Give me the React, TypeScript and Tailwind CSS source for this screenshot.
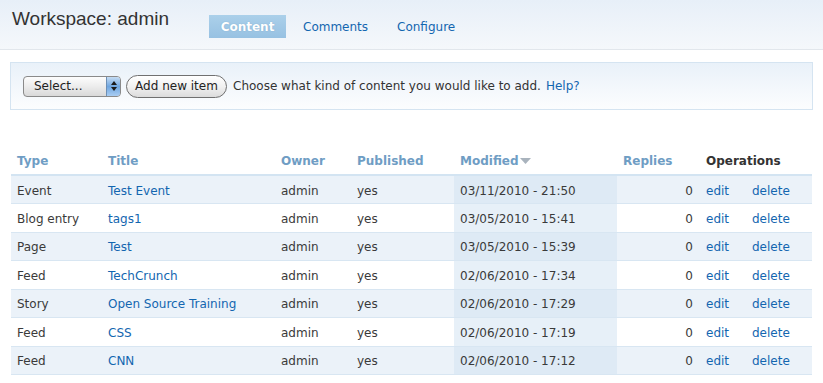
import React from "react";

const rows = [
  { type: "Event", title: "Test Event", date: "03/11/2010 - 21:50" },
  { type: "Blog entry", title: "tags1", date: "03/05/2010 - 15:41" },
  { type: "Page", title: "Test", date: "03/05/2010 - 15:39" },
  { type: "Feed", title: "TechCrunch", date: "02/06/2010 - 17:34" },
  { type: "Story", title: "Open Source Training", date: "02/06/2010 - 17:29" },
  { type: "Feed", title: "CSS", date: "02/06/2010 - 17:19" },
  { type: "Feed", title: "CNN", date: "02/06/2010 - 17:12" },
];

export default function App() {
  return (
    <div className="w-[823px] h-[383px] overflow-hidden bg-white font-['DejaVu_Sans',sans-serif] text-[12px] text-[#3a3a3a]">
      <div className="h-[50px] border-b border-[#e2e7ec] bg-gradient-to-b from-[#e7eff8] to-[#f5f8fb] flex items-start pl-[12px]">
        <div className="font-['Liberation_Sans',Arial,sans-serif] text-[19px] leading-[24px] text-[#333] pt-[7px]">
          Workspace: admin
        </div>
        <div className="flex items-center ml-[40px] mt-[15px] h-[23px]">
          <div className="h-[23px] w-[77px] flex items-center justify-center font-bold text-white bg-gradient-to-b from-[#abd0ea] to-[#97c1e2] [text-shadow:0_0_1px_rgba(80,130,170,0.5)]">
            Content
          </div>
          <div className="ml-[17px] text-[#1366b0]">Comments</div>
          <div className="ml-[29px] text-[#1366b0]">Configure</div>
        </div>
      </div>

      <div className="px-[10px] pt-[12px]">
        <div className="h-[48px] border border-[#d5e4f1] bg-gradient-to-b from-[#e9f1f9] to-[#fcfdfe] flex items-center pl-[12px]">
          <div className="relative w-[98px] h-[21px] rounded-[4px] border border-[#8a8a8a] bg-gradient-to-b from-[#fdfdfd] via-[#ececec] to-[#d9d9d9] flex items-center">
            <span className="pl-[10px] text-[12px] text-[#222]">Select...</span>
            <div className="absolute right-0 top-0 bottom-0 w-[14px] rounded-r-[3px] bg-gradient-to-b from-[#c5dcf3] via-[#6fa6e0] to-[#a9cdf2] border-l border-[#6d8fb5] flex flex-col items-center justify-center gap-[2px]">
              <svg width="6" height="4" viewBox="0 0 6 4"><path d="M0 4 L3 0 L6 4 Z" fill="#1a1a1a" /></svg>
              <svg width="6" height="4" viewBox="0 0 6 4"><path d="M0 0 L3 4 L6 0 Z" fill="#1a1a1a" /></svg>
            </div>
          </div>
          <div className="ml-[5px] w-[101px] h-[23px] rounded-full border border-[#707070] bg-gradient-to-b from-[#ffffff] via-[#f1f1f1] to-[#dcdcdc] flex items-center justify-center text-[12px] text-[#222]">
            Add new item
          </div>
          <span className="ml-[6px] text-[#333]">Choose what kind of content you would like to add.</span>
          <span className="ml-[5px] text-[#1366b0]">Help?</span>
        </div>

        <table className="mt-[37px] ml-[1px] w-[801px] table-fixed border-collapse">
          <colgroup>
            <col className="w-[91px]" />
            <col className="w-[173px]" />
            <col className="w-[76px]" />
            <col className="w-[103px]" />
            <col className="w-[163px]" />
            <col className="w-[83px]" />
            <col className="w-[46px]" />
            <col className="w-[66px]" />
          </colgroup>
          <thead>
            <tr className="h-[28px] border-b-2 border-[#d3e4f2]">
              <th className="text-left font-bold text-[#6f9dc4] pl-[6px] pt-[1px]">Type</th>
              <th className="text-left font-bold text-[#6f9dc4] pl-[6px] pt-[1px]">Title</th>
              <th className="text-left font-bold text-[#6f9dc4] pl-[6px] pt-[1px]">Owner</th>
              <th className="text-left font-bold text-[#6f9dc4] pl-[6px] pt-[1px]">Published</th>
              <th className="text-left font-bold text-[#6f9dc4] pl-[6px] pt-[1px]">
                <span className="inline-flex items-center">
                  Modified
                  <svg width="11" height="6" viewBox="0 0 11 6" className="ml-[1px]"><path d="M0 0 L11 0 L5.5 6 Z" fill="#a9b3bd" /></svg>
                </span>
              </th>
              <th className="text-left font-bold text-[#6f9dc4] pl-[6px] pt-[1px]">Replies</th>
              <th colSpan={2} className="text-left font-bold text-[#333] pl-[6px] pt-[1px]">Operations</th>
            </tr>
          </thead>
          <tbody>
            {rows.map((r, i) => {
              const odd = i % 2 === 0;
              return (
                <tr key={i} className={"h-[28.5px] border-b border-[#d8e6f2] " + (odd ? "bg-[#ebf2f9]" : "bg-white")}>
                  <td className="pl-[6px] pt-[2px]">{r.type}</td>
                  <td className="pl-[6px] pt-[2px] text-[#1366b0]">{r.title}</td>
                  <td className="pl-[6px] pt-[2px]">admin</td>
                  <td className="pl-[6px] pt-[2px]">yes</td>
                  <td className={"pl-[6px] pt-[2px] " + (odd ? "bg-[#deeaf5]" : "bg-[#e7f0f8]")}>{r.date}</td>
                  <td className="text-right pr-[7px] pt-[2px]">0</td>
                  <td className="pl-[6px] pt-[2px] text-[#1366b0]">edit</td>
                  <td className="pl-[6px] pt-[2px] text-[#1366b0]">delete</td>
                </tr>
              );
            })}
          </tbody>
        </table>
      </div>
    </div>
  );
}
